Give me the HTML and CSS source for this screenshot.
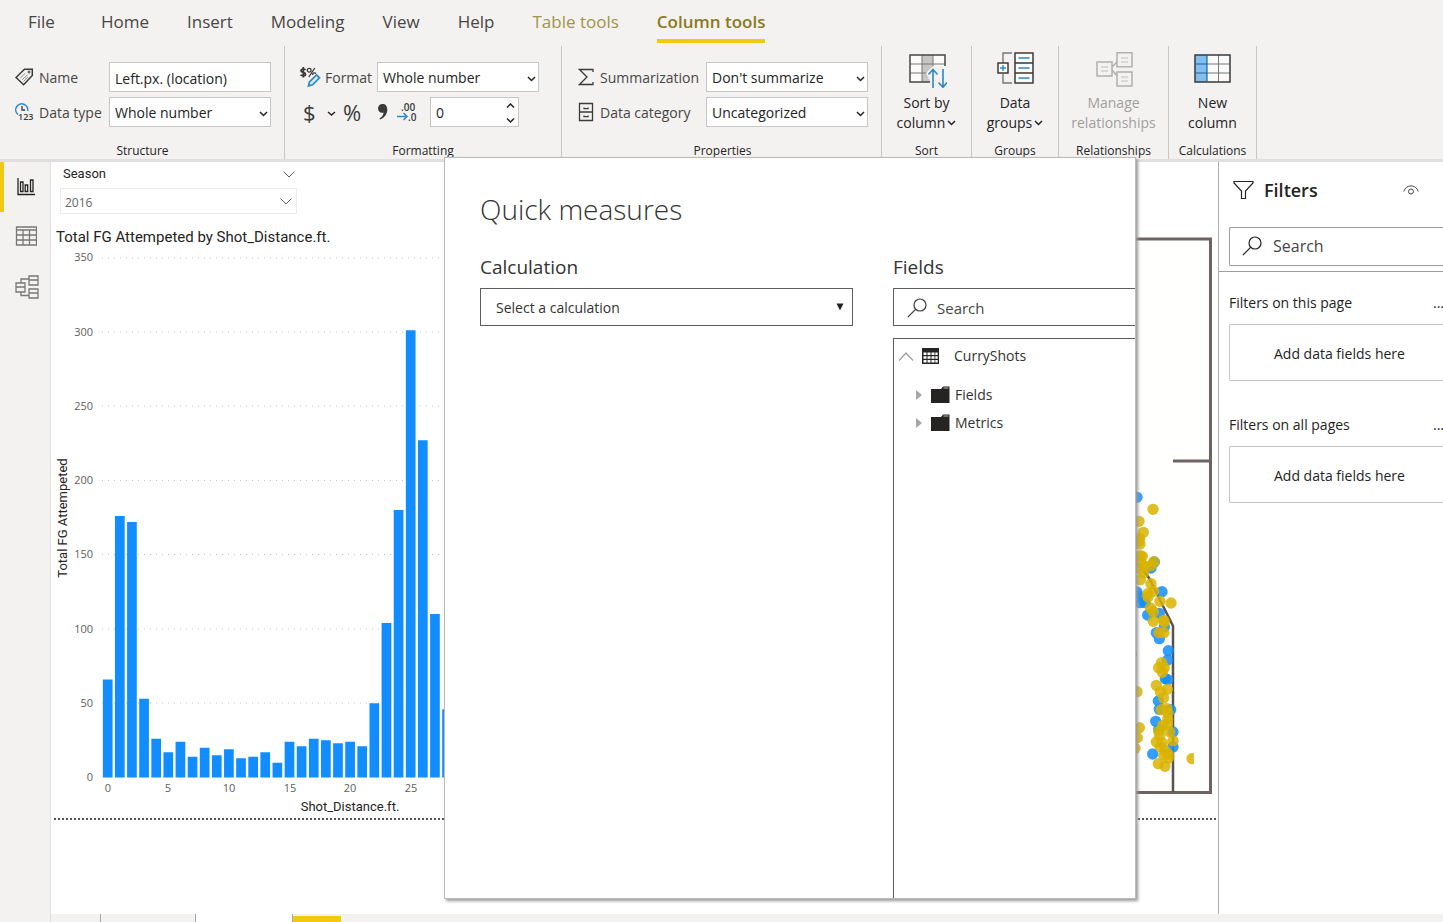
FILE: index.html
```html
<!DOCTYPE html>
<html lang="en">
<head>
<meta charset="utf-8">
<title>Report editor</title>
<link rel="stylesheet" href="styles.css">
</head>
<body>
<header class="top">
  <nav class="tabs">
    <a class="tab tab-file" href="#file">File</a>
    <a class="tab" href="#home">Home</a>
    <a class="tab" href="#insert">Insert</a>
    <a class="tab" href="#modeling">Modeling</a>
    <a class="tab" href="#view">View</a>
    <a class="tab" href="#help">Help</a>
    <a class="tab tab-context" href="#table">Table tools</a>
    <a class="tab tab-context tab-active" href="#column">Column tools</a>
  </nav>
  <div class="ribbon">
    <section class="group group-structure">
      <div class="group-body">
        <div class="row">
          <label class="lead" for="name">
            <svg class="lead-icon" width="19" height="18" viewBox="0 0 19 18" fill="none" stroke="#3b3a39"><path d="M1 9.5 9.5 1.3 17.3 1.3 17.3 7.5 8.6 16.7Z" stroke-width="1.5"/><circle cx="14" cy="4" r="1"/><path d="M5.3 10 10 5.5M7.2 11.8 12.5 6.7M8.5 13.5 13 9" stroke="#8a8886"/></svg>
            Name</label>
          <input class="box" id="name" type="text" value="Left.px. (location)">
        </div>
        <div class="row">
          <label class="lead" for="dtype">
            <svg class="lead-icon" width="19" height="20" viewBox="0 0 19 20" fill="none"><path d="M3 12.5A6 6 0 1 1 12.6 9" stroke="#2b88c8" stroke-width="1.5"/><path d="M7 4v4h3" stroke="#3b3a39" stroke-width="1.3"/><text class="mini mini-tight" x="3" y="18">123</text></svg>
            Data type</label>
          <span class="pick"><select class="box" id="dtype"><option>Whole number</option></select><svg class="caret" width="9" height="6" viewBox="0 0 9 6"><path d="M1 1l3.500 3.500L8 1"/></svg></span>
        </div>
      </div>
      <h2 class="caption">Structure</h2>
    </section>
    <section class="group group-format">
      <div class="group-body">
        <div class="row">
          <label class="lead" for="format">
            <svg class="lead-icon" width="22" height="22" viewBox="0 0 22 22" fill="none"><path d="M6.500 4C5.500 2.800 2 2.800 2 4.800 2 6.900 6.500 6 6.500 8.300 6.500 10.300 2.800 10 1.500 8.900M4.300 1v10.500" stroke="#3b3a39" stroke-width="1.800"/><circle cx="10.200" cy="4.200" r="1.900" stroke="#3b3a39" stroke-width="1.300"/><path d="M15.800 2 9.800 11M13.500 9c0-2.200 2.500-2.700 3.500-1.500" stroke="#3b3a39" stroke-width="1.300"/><path d="M9.500 20 10.500 16 17.500 9 20.500 11.800 13.500 18.800Z" stroke="#2b88c8" stroke-width="1.700" fill="#d7ebf8"/></svg>
            Format</label>
          <span class="pick"><select class="box" id="format"><option>Whole number</option></select><svg class="caret" width="9" height="6" viewBox="0 0 9 6"><path d="M1 1l3.500 3.500L8 1"/></svg></span>
        </div>
        <div class="row tools">
          <button class="tool tool-currency" aria-label="Currency">$<svg width="9" height="6" viewBox="0 0 9 6"><path class="caret-line" d="M1 1l3.500 3L8 1"/></svg></button>
          <button class="tool tool-percent" aria-label="Percent">%</button>
          <button class="tool tool-comma" aria-label="Thousands separator"><svg width="12" height="18" viewBox="0 0 12 18"><path d="M5.500 1C8.500 1 10.300 3 10.300 6.500 10.300 11 7.500 15 3 16.500L2.500 15.500C5 14 6.500 12 6.500 9.500 3.500 10.500 1 8.500 1 5.500 1 3 3 1 5.500 1Z" fill="#3b3a39"/></svg></button>
          <button class="tool tool-decimals" aria-label="Decimal places"><svg width="21" height="24" viewBox="0 0 21 24"><text class="mini" x="4" y="11">.00</text><text class="mini" x="11" y="21">.0</text><path d="M0 16.500h9.500M6.500 13l3.500 3.500L6.500 20" fill="none" stroke="#2b88c8" stroke-width="1.500"/></svg></button>
          <span class="pick"><input class="box box-number" type="text" inputmode="numeric" value="0" aria-label="Decimals"><svg class="spin" width="9" height="20" viewBox="0 0 9 20"><path class="caret-line" d="M1 4.500 4.500 1 8 4.500M1 15.500 4.500 19 8 15.500"/></svg></span>
        </div>
      </div>
      <h2 class="caption">Formatting</h2>
    </section>
    <section class="group group-props">
      <div class="group-body">
        <div class="row">
          <label class="lead" for="summ">
            <svg class="lead-icon" width="16" height="18" viewBox="0 0 16 18" fill="none"><path d="M15 4V1.500H1.500L9 9 1.500 16.500H15V14" stroke="#3b3a39" stroke-width="1.300"/></svg>
            Summarization</label>
          <span class="pick"><select class="box" id="summ"><option>Don't summarize</option></select><svg class="caret" width="9" height="6" viewBox="0 0 9 6"><path d="M1 1l3.500 3.500L8 1"/></svg></span>
        </div>
        <div class="row">
          <label class="lead" for="cat">
            <svg class="lead-icon" width="16" height="20" viewBox="0 0 16 20" fill="none" stroke="#3b3a39" stroke-width="1.300"><path d="M1.500 1.500h13v17h-13zM1.500 10h13M6 5.500v1.200h4V5.500M6 13.500v1.200h4v-1.200"/></svg>
            Data category</label>
          <span class="pick"><select class="box" id="cat"><option>Uncategorized</option></select><svg class="caret" width="9" height="6" viewBox="0 0 9 6"><path d="M1 1l3.500 3.500L8 1"/></svg></span>
        </div>
      </div>
      <h2 class="caption">Properties</h2>
    </section>
    <section class="group group-sort">
      <button class="big">
        <svg width="40" height="36" viewBox="0 0 40 36" fill="none"><path d="M3 3h35v27H3z" fill="#fafafa"/><path d="M15 3h11v27H15z" fill="#c8c6c4"/><path d="M15 3v27M26 3v15M3 12h35M3 21h19" stroke="#797775"/><path d="M38 14V3H3v27h20" stroke="#484644" stroke-width="1.500"/><path d="M19 21 26 14 38 14 39 33H25Z" fill="#f3f2f1"/><path d="M26 36V18M21.500 22.500 26 17.500 30.500 22.500M36 17v18M31.500 30.500 36 35.300 40 30.500" stroke="#2b88c8" stroke-width="1.600"/></svg>
        <span>Sort by<br>column<svg class="inline-caret" width="9" height="6" viewBox="0 0 9 6"><path class="caret-line" d="M1 1l3.500 3.500L8 1"/></svg></span>
      </button>
      <h2 class="caption">Sort</h2>
    </section>
    <section class="group group-groups">
      <button class="big">
        <svg width="38" height="36" viewBox="0 0 38 36" fill="none"><path d="M16 1H7v10M7 22v9h9" stroke="#797775" stroke-width="1.400"/><path d="M19 1h18v30H19zM19 11h18M19 21h18M2 11h10v10H2z" stroke="#3b3a39" stroke-width="1.500" fill="#fafafa"/><path d="M22.500 6h11M22.500 16h11M22.500 26h11M4 16h6M7 13v6" stroke="#2b88c8" stroke-width="1.400"/></svg>
        <span>Data<br>groups<svg class="inline-caret" width="9" height="6" viewBox="0 0 9 6"><path class="caret-line" d="M1 1l3.500 3.500L8 1"/></svg></span>
      </button>
      <h2 class="caption">Groups</h2>
    </section>
    <section class="group group-rel">
      <button class="big" disabled>
        <svg width="38" height="36" viewBox="0 0 38 36" fill="none" stroke="#b3b0ad" stroke-width="1.500"><path d="M2 10h15v14H2zM22 0.800h15v14H22zM22 20h15v14H22zM17 15l5-5M17 18l5 6"/><path d="M6 15h7M6 19h7M26 6h7M26 10h7M26 25h7M26 29h7" stroke="#d2d0ce"/></svg>
        <span>Manage<br>relationships</span>
      </button>
      <h2 class="caption">Relationships</h2>
    </section>
    <section class="group group-calc">
      <button class="big">
        <svg width="38" height="36" viewBox="0 0 38 36" fill="none"><path d="M1 3h35v27H1z" fill="#fafafa"/><path d="M1 3h12v27H1z" fill="#83beec"/><path d="M24.500 3v27M13 12h23M13 21h23" stroke="#797775"/><path d="M1 3h35v27H1z" stroke="#3b3a39" stroke-width="1.500"/><path d="M13 3v27M1 12h12M1 21h12" stroke="#1565ad" stroke-width="1.200"/></svg>
        <span>New<br>column</span>
      </button>
      <h2 class="caption">Calculations</h2>
    </section>
  </div>
</header>

<div class="work">
  <nav class="rail">
    <button class="view view-active" aria-label="Report view"><svg width="22" height="22" viewBox="0 0 22 22" fill="none" stroke="#252423" stroke-width="1.300"><path d="M3 2v16.500H20"/><path d="M5.500 6H8v9.500H5.500zM10.200 9h2.500v6.500h-2.500zM15.500 4H18v11.500h-2.500z"/></svg></button>
    <button class="view" aria-label="Data view"><svg width="22" height="22" viewBox="0 0 22 22" fill="none" stroke="#797775" stroke-width="1.300"><path d="M1.500 1h20v18h-20zM1.500 4h20M1.500 9h20M1.500 14h20M8 4v15M14.500 4v15"/></svg></button>
    <button class="view" aria-label="Model view"><svg width="24" height="24" viewBox="0 0 24 24" fill="none" stroke="#797775" stroke-width="1.300"><path d="M1 8h9v9H1zM1 12h9M14 1h9v9h-9zM14 5h9M14 14h9v9h-9zM14 18h9M6 8V4h8M6 17v3.500h8"/></svg></button>
  </nav>
  <div class="stage">
    <div class="panes">
      <main class="canvas">
        <div class="visuals">
          <div class="left-visuals">
            <div class="slicer">
              <div class="slicer-head"><label for="season">Season</label><svg width="12" height="7" viewBox="0 0 12 7"><path class="thin" d="M.5.500 6 6 11.500.500"/></svg></div>
              <div class="slicer-pick"><select class="slicer-box" id="season"><option>2016</option></select><svg class="slicer-caret" width="12" height="7" viewBox="0 0 12 7"><path class="thin" d="M.5.500 6 6 11.500.500"/></svg></div>
            </div>
            <h3 class="chart-title">Total FG Attempeted by Shot_Distance.ft.</h3>
            <svg class="chart" width="420" height="570" viewBox="51 248 420 570" role="img" aria-label="Total FG Attempeted by Shot_Distance.ft.">
              <path class="grid" d="M102 258H470M102 332H470M102 406H470M102 480.500H470M102 554.500H470M102 629H470M102 703H470"/>
              <g class="tick tick-y"><text x="93" y="261">350</text><text x="93" y="336">300</text><text x="93" y="410">250</text><text x="93" y="484">200</text><text x="93" y="558">150</text><text x="93" y="633">100</text><text x="93" y="707">50</text><text x="93" y="781">0</text></g>
              <g transform="translate(107.700 777.500) scale(1 -1.486)"><path class="bars" d="M0 0v66M12.120 0v176M24.240 0v172M36.360 0v53M48.480 0v26M60.600 0v17M72.720 0v24M84.840 0v14M96.960 0v20M109.080 0v15M121.200 0v19M133.320 0v13M145.440 0v14M157.560 0v17M169.680 0v10M181.800 0v24M193.920 0v21M206.040 0v26M218.160 0v25M230.280 0v23M242.400 0v24M254.520 0v21M266.640 0v50M278.760 0v104M290.880 0v180M303 0v301M315.120 0v227M327.240 0v110M339.360 0v46"/></g>
              <g class="tick tick-x"><text x="108" y="792">0</text><text x="168" y="792">5</text><text x="229" y="792">10</text><text x="290" y="792">15</text><text x="350" y="792">20</text><text x="411" y="792">25</text></g>
              <text class="axis" x="350" y="811">Shot_Distance.ft.</text>
              <text class="axis" transform="translate(67 518) rotate(-90)">Total FG Attempeted</text>
            </svg>
          </div>
          <svg class="court" width="200" height="570" viewBox="1014 230 200 570" role="img" aria-label="Shot locations">
            <path d="M1014 239H1210V792H1014Z" fill="#fffffd"/>
            <path class="court-line" d="M1014 239H1210.500V792.500H1014M1173 461H1210"/>
            <path class="court-arc" d="M1014 520C1080 520 1130 550 1149 578L1173 626V792"/>
            <g class="shots" transform="translate(1120 470) scale(.3333)">
              <g fill="#118dff"><circle cx="51" cy="82" r="17"/><circle cx="103" cy="276" r="17"/><circle cx="93" cy="294" r="17"/><circle cx="126" cy="365" r="17"/><circle cx="51" cy="366" r="17"/><circle cx="57" cy="380" r="17"/><circle cx="60" cy="398" r="17"/><circle cx="75" cy="398" r="17"/><circle cx="83" cy="435" r="17"/><circle cx="118" cy="430" r="17"/><circle cx="133" cy="470" r="17"/><circle cx="109" cy="488" r="17"/><circle cx="118" cy="506" r="17"/><circle cx="145" cy="542" r="17"/><circle cx="143" cy="570" r="17"/><circle cx="34" cy="553" r="17"/><circle cx="136" cy="626" r="17"/><circle cx="143" cy="629" r="17"/><circle cx="115" cy="693" r="17"/><circle cx="118" cy="718" r="17"/><circle cx="152" cy="719" r="17"/><circle cx="107" cy="754" r="17"/><circle cx="116" cy="778" r="17"/><circle cx="159" cy="786" r="17"/><circle cx="159" cy="831" r="17"/><circle cx="98" cy="852" r="17"/></g>
              <g fill="#d9b300"><circle cx="99" cy="118" r="17"/><circle cx="57" cy="154" r="17"/><circle cx="70" cy="187" r="17"/><circle cx="59" cy="205" r="17"/><circle cx="60" cy="222" r="17"/><circle cx="57" cy="212" r="17"/><circle cx="67" cy="259" r="17"/><circle cx="61" cy="257" r="17"/><circle cx="62" cy="275" r="17"/><circle cx="102" cy="275" r="17"/><circle cx="92" cy="287" r="17"/><circle cx="72" cy="288" r="17"/><circle cx="57" cy="295" r="17"/><circle cx="71" cy="309" r="17"/><circle cx="61" cy="329" r="17"/><circle cx="93" cy="341" r="17"/><circle cx="101" cy="364" r="17"/><circle cx="83" cy="371" r="17"/><circle cx="84" cy="381" r="17"/><circle cx="153" cy="399" r="17"/><circle cx="120" cy="394" r="17"/><circle cx="92" cy="414" r="17"/><circle cx="100" cy="425" r="17"/><circle cx="100" cy="454" r="17"/><circle cx="131" cy="451" r="17"/><circle cx="133" cy="456" r="17"/><circle cx="117" cy="488" r="17"/><circle cx="132" cy="488" r="17"/><circle cx="125" cy="578" r="17"/><circle cx="116" cy="593" r="17"/><circle cx="133" cy="593" r="17"/><circle cx="127" cy="607" r="17"/><circle cx="109" cy="646" r="17"/><circle cx="142" cy="658" r="17"/><circle cx="121" cy="665" r="17"/><circle cx="131" cy="684" r="17"/><circle cx="51" cy="665" r="17"/><circle cx="124" cy="719" r="17"/><circle cx="141" cy="716" r="17"/><circle cx="144" cy="729" r="17"/><circle cx="143" cy="747" r="17"/><circle cx="58" cy="773" r="17"/><circle cx="127" cy="767" r="17"/><circle cx="143" cy="762" r="17"/><circle cx="116" cy="784" r="17"/><circle cx="149" cy="785" r="17"/><circle cx="52" cy="803" r="17"/><circle cx="119" cy="798" r="17"/><circle cx="109" cy="816" r="17"/><circle cx="127" cy="819" r="17"/><circle cx="159" cy="812" r="17"/><circle cx="45" cy="835" r="17"/><circle cx="121" cy="830" r="17"/><circle cx="135" cy="842" r="17"/><circle cx="145" cy="853" r="17"/><circle cx="131" cy="855" r="17"/><circle cx="145" cy="865" r="17"/><circle cx="115" cy="881" r="17"/><circle cx="135" cy="889" r="17"/><path d="M222 850A17 17 0 1 0 222 882Z"/></g>
            </g>
          </svg>
        </div>
        <div class="page-edge"></div>
      </main>
      <aside class="filters">
        <div class="filters-head">
          <svg width="22" height="20" viewBox="0 0 22 20" fill="none" stroke="#252423" stroke-width="1.200"><path d="M1 1.500h19v1.500L12.500 11v7.500h-4V11L1 3Z"/></svg>
          <h2 class="filters-title">Filters</h2>
          <svg class="eye" width="16" height="12" viewBox="0 0 16 12" fill="none" stroke="#484644"><path d="M.7 7.500C3 0 13 0 15.300 7.500"/><circle cx="8" cy="7.500" r="2.500"/></svg>
        </div>
        <label class="filters-search">
          <svg width="20" height="20" viewBox="0 0 20 20" fill="none" stroke="#252423" stroke-width="1.200"><circle cx="13" cy="7" r="6"/><path d="M8.800 11.200.800 19.200"/></svg>
          <input class="bare" type="text" placeholder="Search" aria-label="Search filters">
        </label>
        <section class="filter-section">
          <div class="filter-head"><h3 class="filter-name">Filters on this page</h3><button class="dots" aria-label="More options">...</button></div>
          <div class="drop">Add data fields here</div>
        </section>
        <section class="filter-section">
          <div class="filter-head"><h3 class="filter-name">Filters on all pages</h3><button class="dots" aria-label="More options">...</button></div>
          <div class="drop">Add data fields here</div>
        </section>
      </aside>
    </div>
    <footer class="pages"><span class="page page-nav"></span><span class="page page-one"></span><span class="page page-current"></span><span class="page-add"></span></footer>
  </div>
</div>

<div class="dialog" role="dialog" aria-labelledby="dlg">
  <h1 class="dialog-title" id="dlg">Quick measures</h1>
  <div class="dialog-cols">
    <div class="calc">
      <label class="dialog-label" for="calc">Calculation</label>
      <span class="pick"><select class="dialog-box" id="calc"><option>Select a calculation</option></select><svg class="calc-caret" width="8" height="8" viewBox="0 0 8 8"><path d="M.5.500h7L4 7.500Z" fill="#252423"/></svg></span>
    </div>
    <div class="fields">
      <label class="dialog-label" for="fsearch">Fields</label>
      <div class="dialog-box fields-search">
        <svg width="20" height="20" viewBox="0 0 20 20" fill="none" stroke="#3b3a39" stroke-width="1.200"><circle cx="13" cy="7" r="6"/><path d="M8.800 11.200.800 19.200"/></svg>
        <input class="bare bare-small" id="fsearch" type="text" placeholder="Search">
      </div>
      <div class="tree">
        <div class="node node-table">
          <svg width="16" height="9" viewBox="0 0 16 9" fill="none" stroke="#a19f9d" stroke-width="1.200"><path d="M1 8.500 8 1l7 7.500"/></svg>
          <svg width="17" height="16" viewBox="0 0 17 16"><path d="M0 0h17v16H0z" fill="#252423"/><path d="M1.500 4.500h3v2.500h-3zM5.500 4.500h3v2.500h-3zM9.500 4.500h3v2.500h-3zM13.300 4.500h2.400v2.500h-2.400zM1.500 8.300h3v2.500h-3zM5.500 8.300h3v2.500h-3zM9.500 8.300h3v2.500h-3zM13.300 8.300h2.400v2.500h-2.400zM1.500 12.100h3v2.500h-3zM5.500 12.100h3v2.500h-3zM9.500 12.100h3v2.500h-3zM13.300 12.100h2.400v2.500h-2.400z" fill="#fff"/></svg>
          <span class="node-table-name">CurryShots</span>
        </div>
        <div class="node">
          <svg width="6" height="10" viewBox="0 0 6 10"><path d="M0 0l6 5-6 5z" fill="#a6a6a6"/></svg>
          <svg width="19" height="18" viewBox="0 0 19 18"><path d="M0 3h10l2-2.500h6.500V17H0z" fill="#252423"/><path d="M12.500 2h5" stroke="#bbb"/></svg>
          <span>Fields</span>
        </div>
        <div class="node">
          <svg width="6" height="10" viewBox="0 0 6 10"><path d="M0 0l6 5-6 5z" fill="#a6a6a6"/></svg>
          <svg width="19" height="18" viewBox="0 0 19 18"><path d="M0 3h10l2-2.500h6.500V17H0z" fill="#252423"/><path d="M12.500 2h5" stroke="#bbb"/></svg>
          <span>Metrics</span>
        </div>
      </div>
    </div>
  </div>
</div>
</body>
</html>
```
FILE: styles.css
```css
* { box-sizing: border-box; }
body {
  margin: 0;
  min-height: 100vh;
  display: flex;
  flex-direction: column;
  position: relative;
  overflow: hidden;
  background: #f3f2f1;
  color: #252423;
  font: 14px/20px "Open Sans", "Noto Sans", sans-serif;
}
h1, h2, h3 { margin: 0; font-weight: 400; }
svg { display: block; flex: none; }
button, input, select { font: inherit; color: inherit; margin: 0; border-radius: 0; }
button { background: none; border: 0; padding: 0; }
select { appearance: none; }

.top { border-bottom: 3px solid #e1dfdd; }
.tabs { display: flex; gap: 38px; padding: 8px 28px 0; height: 46px; }
.tab { color: #484644; text-decoration: none; font-size: 17px; line-height: 27px; height: 35px; }
.tab-file { margin-right: 8px; }
.tab-context { color: #a19348; }
.tab-active { color: #8a7a1c; font-weight: 600; border-bottom: 4px solid #f2c811; }

.ribbon { display: flex; height: 113px; }
.group { display: flex; flex-direction: column; justify-content: space-between; border-right: 1px solid #c8c6c4; flex: none; }
.group-structure { width: 285px; padding-left: 15px; }
.group-format { width: 277px; padding-left: 14px; }
.group-props { width: 320px; padding-left: 16px; }
.group-sort { width: 90px; }
.group-groups { width: 87px; }
.group-rel { width: 110px; }
.group-calc { width: 88px; }
.group-body { display: flex; flex-direction: column; gap: 5px; padding-top: 16px; }
.row { display: flex; align-items: center; }
.lead { display: flex; align-items: center; gap: 5px; padding-top: 2px; color: #484644; white-space: nowrap; }
.lead-icon { margin-top: -2px; }
.group-structure .lead { width: 94px; }
.group-format .lead { width: 78px; gap: 4px; }
.group-props .lead { width: 128px; gap: 6px; }
.pick { position: relative; display: block; }
.box { display: block; width: 162px; height: 30px; padding: 2px 5px 0; border: 1px solid #c8c6c4; background: #fff; }
.box-number { width: 89px; padding: 0 5px; }
.caret { position: absolute; right: 3px; top: 14px; }
.caret path, .caret-line { fill: none; stroke: #252423; stroke-width: 1.5; }
.spin { position: absolute; right: 4px; top: 6px; }
.mini { font: 600 10px/10px "Open Sans", sans-serif; fill: #3b3a39; }
.mini-tight { font-size: 9px; }
.tool { display: flex; align-items: center; height: 30px; color: #3b3a39; font-size: 22px; }
.tool-currency { width: 44px; padding-left: 4px; gap: 11px; }
.tool-currency svg { margin-top: 3px; }
.tool-percent { width: 34px; }
.tool-comma { width: 20px; }
.tool-decimals { width: 33px; }
.caption { font-size: 12px; line-height: 16px; text-align: center; }
.group-structure .caption, .group-format .caption, .group-props .caption { margin-left: -14px; }
.big { display: flex; flex-direction: column; align-items: center; gap: 5px; padding-top: 6px; }
.big:disabled { color: #a19f9d; }
.inline-caret { display: inline-block; margin-left: 2px; vertical-align: 2px; }

.work { flex: 1; display: flex; }
.rail { width: 51px; flex: none; border-right: 1px solid #e1dfdd; display: flex; flex-direction: column; }
.view { height: 50px; padding-left: 11px; border-left: 4px solid transparent; }
.view-active { border-left-color: #f2c811; }
.stage { flex: 1; min-width: 0; display: flex; flex-direction: column; background: #fff; }
.panes { flex: 1; display: flex; }
.canvas { flex: 1; min-width: 0; font-family: Roboto, sans-serif; }
.visuals { display: flex; justify-content: space-between; align-items: flex-end; }
.slicer { width: 246px; padding-left: 9px; }
.slicer-head { display: flex; justify-content: space-between; align-items: center; padding: 0 2px 0 3px; height: 24px; font-size: 13px; }
.slicer-pick { position: relative; margin-top: 2px; }
.slicer-box { display: block; width: 237px; height: 26px; border: 1px solid #edebe9; background: #fff; color: #666; font: 12px "Open Sans", sans-serif; padding: 2px 4px 0; }
.slicer-caret { position: absolute; right: 5px; top: 10px; }
.thin { fill: none; stroke: #605e5c; }
.chart-title { font-size: 15px; line-height: 20px; margin: 13px 0 1px 5px; }
.grid { stroke: #c8c8c8; stroke-dasharray: 1 5; fill: none; }
.bars { stroke: #118dff; stroke-width: 9.7; }
.tick { font: 11px "Open Sans", sans-serif; fill: #605e5c; }
.tick-y { text-anchor: end; }
.tick-x, .axis { text-anchor: middle; }
.axis { font: 13px Roboto, sans-serif; fill: #252423; }
.court { margin: 0 4px 18px 0; }
.court-line { fill: none; stroke: #6d6461; stroke-width: 3; }
.court-arc { fill: none; stroke: #5a5250; stroke-width: 2.5; }
.shots circle, .shots path { fill-opacity: .85; }
.page-edge { height: 2px; margin: 0 1px 0 3px; background: repeating-linear-gradient(90deg, #555 0 2px, transparent 2px 4px); }

.filters { width: 225px; flex: none; overflow: hidden; border-left: 1px solid #b3b0ad; }
.filters-head { display: flex; align-items: center; padding: 14px 24px 0 14px; height: 42px; gap: 9px; }
.filters-title { font-size: 18px; line-height: 28px; font-weight: 600; flex: 1; }
.filters-search { display: flex; align-items: center; gap: 11px; height: 39px; margin: 23px 0 5px 10px; padding: 0 0 2px 12px; border: 1px solid #a19f9d; border-right: 0; border-radius: 2px 0 0 2px; }
.bare { border: 0; outline: 0; background: none; padding: 0; width: 120px; font-size: 16px; }
.bare::placeholder { color: #484644; opacity: 1; }
.bare-small { font-size: 15px; }
.filter-section { padding: 21px 0 0 10px; }
.filters-search + .filter-section { border-top: 1px solid #a19f9d; }
.filter-head { display: flex; justify-content: space-between; height: 20px; margin-bottom: 11px; }
.filter-name { font-size: 14px; white-space: nowrap; }
.dots { width: 10px; overflow: hidden; text-align: left; }
.drop { height: 57px; padding-left: 44px; line-height: 57px; border: 1px solid #c8c6c4; border-right: 0; border-radius: 2px 0 0 2px; margin-bottom: 13px; }

.pages { display: flex; height: 8px; background: #f3f2f1; }
.page { border-right: 1px solid #a6a6a6; }
.page-nav { width: 50px; }
.page-one { width: 95px; }
.page-current { width: 97px; background: #fff; }
.page-add { width: 48px; margin-top: 2px; background: #f2c811; }

.dialog { position: absolute; left: 444px; top: 157px; width: 692px; bottom: 23px; display: flex; flex-direction: column; overflow: hidden; background: #fff; border: 1px solid #bbb; box-shadow: 2px 2px 3px #999; color: #333; }
.dialog-title { font-size: 28px; line-height: 40px; font-weight: 300; padding: 31px 0 0 35px; }
.dialog-cols { flex: 1; display: flex; gap: 40px; padding: 25px 0 0 35px; }
.calc { width: 373px; flex: none; }
.dialog-label { display: block; font-size: 19px; line-height: 26px; margin-bottom: 8px; }
.dialog-box { display: block; width: 100%; height: 38px; padding: 2px 15px 0; border: 1px solid #605e5c; background: #fff; }
.calc-caret { position: absolute; right: 9px; top: 15px; }
.fields { flex: 1; display: flex; flex-direction: column; }
.fields-search { display: flex; align-items: center; gap: 10px; padding: 2px 13px 0; border-right: 0; }
.tree { flex: 1; margin-top: 12px; border: 1px solid #605e5c; border-width: 1px 0 0 1px; }
.node { display: flex; align-items: center; height: 28px; padding-left: 22px; gap: 5px; }
.node svg:first-child { margin-right: 4px; }
.node-table { height: 34px; padding-left: 4px; margin-bottom: 8px; gap: 4px; }
.node-table-name { margin-left: 11px; }
```
